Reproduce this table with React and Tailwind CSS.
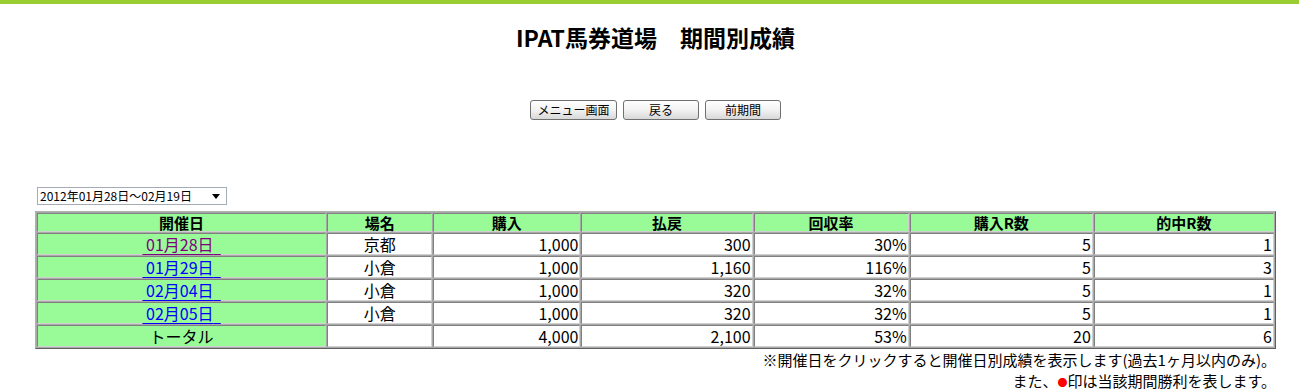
import React from "react";

const rows = [
  { date: "01月28日", visited: true, place: "京都", buy: "1,000", pay: "300", rate: "30%", buyR: "5", hitR: "1" },
  { date: "01月29日", place: "小倉", buy: "1,000", pay: "1,160", rate: "116%", buyR: "5", hitR: "3" },
  { date: "02月04日", place: "小倉", buy: "1,000", pay: "320", rate: "32%", buyR: "5", hitR: "1" },
  { date: "02月05日", place: "小倉", buy: "1,000", pay: "320", rate: "32%", buyR: "5", hitR: "1" },
];

const headers = [
  { label: "開催日", w: "w-[289px]" },
  { label: "場名", w: "w-[105px]" },
  { label: "購入", w: "w-[147px]" },
  { label: "払戻", w: "w-[171px]" },
  { label: "回収率", w: "w-[155px]" },
  { label: "購入R数", w: "w-[183px]" },
  { label: "的中R数", w: "w-[180px]" },
];

// inset-looking cell border
const edge = "border border-t-[#808080] border-l-[#808080] border-b-[#d0d0d0] border-r-[#d0d0d0] px-[1px]";
const cell = `${edge} leading-[20px] text-[16px]`;
const head = `${edge} bg-[#98fb98] text-center text-[15px] font-bold leading-[17px]`;

const Btn = ({ children, w }) => (
  <button
    className={`${w} h-[20px] rounded-[3px] border border-[#707070] bg-gradient-to-b from-white via-[#f2f2f2] to-[#d8d8d8] text-[12px] leading-[18px] text-black`}
  >
    {children}
  </button>
);

export default function App() {
  return (
    <div className="min-h-[391px] bg-white font-['Noto_Sans_CJK_JP',sans-serif] text-black">
      <div className="h-[4px] bg-[#9acd32]" />
      <div className="ml-[35px] w-[1241px]">
        <h1 className="mt-[19px] text-center text-[23px] font-bold leading-[28px]">IPAT馬券道場　期間別成績</h1>

        <div className="mt-[49px] flex justify-center gap-[6px]">
          <Btn w="w-[87px]">メニュー画面</Btn>
          <Btn w="w-[76px]">戻る</Btn>
          <Btn w="w-[76px]">前期間</Btn>
        </div>

        <div className="mt-[67px] ml-[2px] flex h-[18px] w-[190px] items-center justify-between border border-[#a5acb5] bg-white pl-[2px] pr-[6px] text-[12px] leading-[16px]">
          <span>2012年01月28日～02月19日</span>
          <svg width="8" height="5" viewBox="0 0 8 5">
            <path d="M0 0 L8 0 L4 5 Z" fill="#000" />
          </svg>
        </div>

        <table className="mt-[6px] w-[1241px] table-fixed border-separate border-spacing-[1px] border border-t-[#b0b0b0] border-l-[#b0b0b0] border-b-[#606060] border-r-[#606060] bg-[#a8a8a8]">
          <thead>
            <tr>
              {headers.map((h) => (
                <th key={h.label} className={`${h.w} ${head}`}>
                  {h.label}
                </th>
              ))}
            </tr>
          </thead>
          <tbody>
            {rows.map((r) => (
              <tr key={r.date}>
                <td className={`${cell} bg-[#98fb98] text-center`}>
                  <a href="#" className={`underline underline-offset-[3px] ${r.visited ? "text-[#800080]" : "text-[#0000ff]"}`}>
                    {"\u00a0"}
                    {r.date}
                    {"\u00a0\u00a0"}
                  </a>
                </td>
                <td className={`${cell} bg-white text-center`}>{r.place}</td>
                <td className={`${cell} bg-white text-right`}>{r.buy}</td>
                <td className={`${cell} bg-white text-right`}>{r.pay}</td>
                <td className={`${cell} bg-white text-right`}>{r.rate}</td>
                <td className={`${cell} bg-white text-right`}>{r.buyR}</td>
                <td className={`${cell} bg-white text-right`}>{r.hitR}</td>
              </tr>
            ))}
            <tr>
              <td className={`${cell} bg-[#98fb98] text-center`}>トータル</td>
              <td className={`${cell} bg-white`}></td>
              <td className={`${cell} bg-white text-right`}>4,000</td>
              <td className={`${cell} bg-white text-right`}>2,100</td>
              <td className={`${cell} bg-white text-right`}>53%</td>
              <td className={`${cell} bg-white text-right`}>20</td>
              <td className={`${cell} bg-white text-right`}>6</td>
            </tr>
          </tbody>
        </table>

        <div className="text-right text-[15px] leading-[21px]">
          <p>※開催日をクリックすると開催日別成績を表示します(過去1ヶ月以内のみ)。</p>
          <p>
            また、<span className="text-[10px] text-[#ff0000]">●</span>印は当該期間勝利を表します。
          </p>
        </div>
      </div>
    </div>
  );
}
